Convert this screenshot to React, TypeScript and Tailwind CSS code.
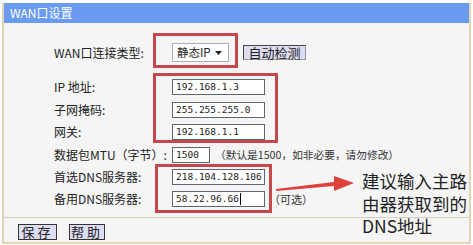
const cjk = { fontFamily: '"Noto Sans CJK SC", "Liberation Sans", sans-serif' };
const mono = { fontFamily: '"DejaVu Sans Mono", "Liberation Mono", monospace' };

function Field({ value, width = "w-[93px]", cursor = false }: { value: string; width?: string; cursor?: boolean }) {
    return (
        <div
            className={`${width} h-[16px] border border-[#5f6670] bg-white pl-[3px] flex items-center text-[9.5px] text-[#222]`}
            style={mono}
        >
            {value}
            {cursor && <span className="w-px h-[12px] bg-black ml-px" />}
        </div>
    );
}

function Row({ label, mt, children }: { label: string; mt: string; children: React.ReactNode }) {
    return (
        <div className={`flex items-center h-[16px] ${mt}`}>
            <div className="w-[118px] text-[12px] text-[#222] whitespace-nowrap">{label}</div>
            {children}
        </div>
    );
}

export default function App() {
    return (
        <div className="w-[473px] h-[245px] bg-white relative overflow-hidden" style={cjk}>
            <div className="mt-[3px] ml-[2px] w-[469px] h-[241px] border-x-2 border-b-2 border-[#e2d5b5] bg-[#f5f5f5] flex flex-col">
                {/* title bar */}
                <div className="h-[20px] bg-[#6a9bf2] text-white text-[12px] leading-[20px] pl-[6px]">WAN口设置</div>

                {/* form */}
                <div className="h-[194px] pl-[50px]">
                    <div className="flex items-center h-[19px] mt-[20px]">
                        <div className="w-[118px] text-[12px] text-[#222] whitespace-nowrap">WAN口连接类型:</div>
                        <div className="w-[57px] h-[19px] border border-[#a9b0b8] bg-white flex items-center pl-[4px] text-[11.5px] text-[#222]">
                            <span className="grow">静态IP</span>
                            <svg width="7" height="4" viewBox="0 0 7 4" className="mr-[6px]">
                                <polygon points="0,0 7,0 3.5,4" fill="#222" />
                            </svg>
                        </div>
                        <div className="ml-[14px] w-[63px] h-[15px] border border-[#444] border-r-[#999] border-b-[#999] bg-[#dcdcf2] text-[13px] leading-[13px] text-[#222] flex items-center justify-center">
                            自动检测
                        </div>
                    </div>

                    <Row label="IP 地址:" mt="mt-[17px]">
                        <Field value="192.168.1.3" />
                    </Row>
                    <Row label="子网掩码:" mt="mt-[7px]">
                        <Field value="255.255.255.0" />
                    </Row>
                    <Row label="网关:" mt="mt-[6px]">
                        <Field value="192.168.1.1" />
                    </Row>
                    <Row label="数据包MTU（字节）:" mt="mt-[7px]">
                        <Field value="1500" width="w-[38px]" />
                        <span className="ml-[5px] text-[10.7px] text-[#333] whitespace-nowrap">（默认是1500，如非必要，请勿修改）</span>
                    </Row>
                    <Row label="首选DNS服务器:" mt="mt-[6px]">
                        <Field value="218.104.128.106" />
                    </Row>
                    <Row label="备用DNS服务器:" mt="mt-[6px]">
                        <Field value="58.22.96.66" cursor />
                        <span className="ml-[4px] text-[11px] text-[#333]">（可选）</span>
                    </Row>
                </div>

                {/* footer */}
                <div className="grow border-t border-[#d8ceb4] flex items-start pl-[14px] pt-[6px] gap-[12px]">
                    <div className="w-[39px] h-[16px] border border-[#333] bg-[#dcdcf2] text-[13px] leading-[14px] text-[#222] text-center tracking-[3px]">保存</div>
                    <div className="w-[36px] h-[16px] border border-[#333] bg-[#dcdcf2] text-[13px] leading-[14px] text-[#222] text-center tracking-[3px]">帮助</div>
                </div>
            </div>

            {/* red annotation frames */}
            <div className="absolute left-[153px] top-[33px] w-[85px] h-[35px] border-[3px] border-[#c4474b]" />
            <div className="absolute left-[153px] top-[73px] w-[125px] h-[70px] border-[3px] border-[#c4474b]" />
            <div className="absolute left-[155px] top-[164px] w-[117px] h-[49px] border-[3px] border-[#c4474b]" />

            {/* arrow */}
            <svg className="absolute left-[276px] top-[174px]" width="80" height="22" viewBox="0 0 80 22">
                <polygon points="0,15 58,8 58,2 78,9 58,17 58,12 0,17" fill="#e0403a" />
            </svg>

            {/* annotation text */}
            <div className="absolute left-[362px] top-[170px] text-[17.5px] leading-[22.5px] text-[#222] whitespace-nowrap">
                <div>建议输入主路</div>
                <div>由器获取到的</div>
                <div>DNS地址</div>
            </div>
        </div>
    );
}
